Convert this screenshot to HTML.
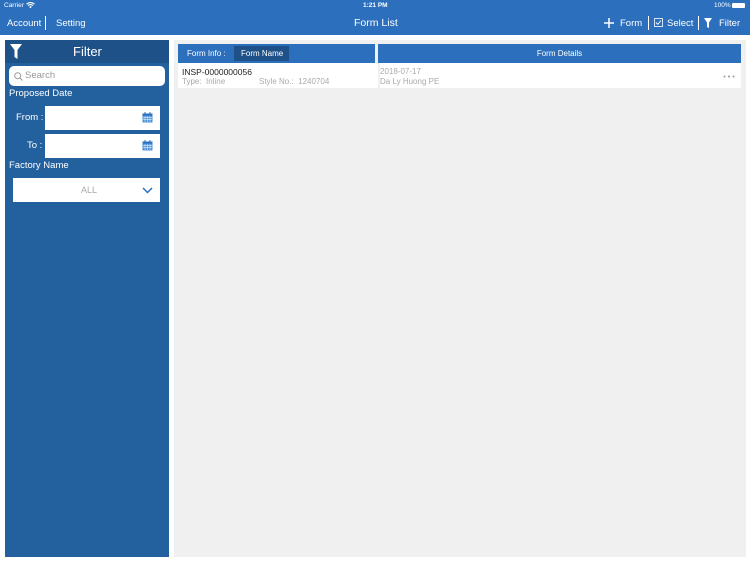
<!DOCTYPE html>
<html><head><meta charset="utf-8"><style>
*{margin:0;padding:0;box-sizing:border-box}
body{width:750px;height:562px;background:#fff;font-family:"Liberation Sans",sans-serif;position:relative;overflow:hidden}
.top{position:absolute;left:0;top:0;width:750px;height:35px;background:#2b6fbd;color:#fff}
.t{position:absolute;font-size:9.5px;color:#fff}
.abs{position:absolute}
.side{position:absolute;left:5px;top:40px;width:164px;height:517px;background:#23609e}
.sh{position:absolute;left:0;top:0;width:164px;height:23px;background:#1f5189}
.main{position:absolute;left:174px;top:40px;width:572px;height:517px;background:#f0f0f0}
.inp{position:absolute;background:#fff}
.lbl{position:absolute;color:#fff;font-size:9.5px}
</style></head><body>
<div class="top">
 <div class="abs" style="left:4px;top:2px;font-size:6.5px">Carrier
  <svg width="9" height="6" viewBox="0 0 9 6" style="vertical-align:-1px"><path d="M0.5 2.2Q4.5 -1 8.5 2.2M2 3.6Q4.5 1.6 7 3.6" stroke="#fff" stroke-width="1.1" fill="none"/><circle cx="4.5" cy="5" r="1" fill="#fff"/></svg></div>
 <div class="abs" style="left:363px;top:2px;font-size:6.5px;font-weight:bold">1:21 PM</div>
 <div class="abs" style="left:714px;top:2px;font-size:6.5px">100% <span style="display:inline-block;width:13px;height:5px;background:#fff;vertical-align:-0.5px;border-radius:1px"></span></div>
 <div class="t" style="left:7px;top:18px">Account</div>
 <div class="abs" style="left:45px;top:16px;width:1px;height:14px;background:#fff"></div>
 <div class="t" style="left:56px;top:18px">Setting</div>
 <div class="abs" style="left:354px;top:17px;font-size:10.5px">Form List</div>
 <svg class="abs" style="left:604px;top:18px" width="10" height="10"><path d="M5 0V10M0 5H10" stroke="#fff" stroke-width="1.5"/></svg>
 <div class="t" style="left:620px;top:18px">Form</div>
 <div class="abs" style="left:648px;top:16px;width:1px;height:14px;background:#fff"></div>
 <svg class="abs" style="left:654px;top:18px" width="9" height="9"><rect x="0.5" y="0.5" width="8" height="8" fill="none" stroke="#fff" stroke-width="0.8"/><path d="M2 4.5L3.8 6.3L7 2.5" stroke="#fff" stroke-width="0.9" fill="none"/></svg>
 <div class="t" style="left:667px;top:18px">Select</div>
 <div class="abs" style="left:698px;top:16px;width:1px;height:14px;background:#fff"></div>
 <svg class="abs" style="left:704px;top:18px" width="8" height="10"><path d="M0 0H8L5 4.5V10L3 9V4.5Z" fill="#fff"/></svg>
 <div class="t" style="left:719px;top:18px">Filter</div>
</div>

<div class="side">
 <div class="sh">
  <svg class="abs" style="left:5px;top:4px" width="12" height="15"><path d="M0 0H12L7.5 6V15L4.5 13V6Z" fill="#fff"/></svg>
  <div class="abs" style="left:68px;top:4px;color:#fff;font-size:13px">Filter</div>
 </div>
 <div class="inp" style="left:4px;top:26px;width:156px;height:20px;border-radius:5px">
  <svg class="abs" style="left:5px;top:6px" width="9" height="9"><circle cx="3.7" cy="3.7" r="3" fill="none" stroke="#999" stroke-width="1"/><path d="M6 6L8.5 8.5" stroke="#999" stroke-width="1"/></svg>
  <div class="abs" style="left:16px;top:4px;font-size:9.5px;color:#999">Search</div>
 </div>
 <div class="lbl" style="left:4px;top:48px">Proposed Date</div>
 <div class="lbl" style="left:11px;top:72px">From :</div>
 <div class="inp" style="left:40px;top:66px;width:115px;height:24px">
  <svg class="abs" style="left:97px;top:6px" width="11" height="11"><rect x="0.5" y="1.5" width="10" height="9" fill="#4a8fd6"/><rect x="0.5" y="1.5" width="10" height="2" fill="#2a6fc0"/><path d="M3 0V3M8 0V3" stroke="#2a6fc0"/><path d="M1 5.5H10M1 7.5H10M3 4V10M5.5 4V10M8 4V10" stroke="#fff" stroke-width="0.5"/></svg>
 </div>
 <div class="lbl" style="left:22px;top:100px">To :</div>
 <div class="inp" style="left:40px;top:94px;width:115px;height:24px">
  <svg class="abs" style="left:97px;top:6px" width="11" height="11"><rect x="0.5" y="1.5" width="10" height="9" fill="#4a8fd6"/><rect x="0.5" y="1.5" width="10" height="2" fill="#2a6fc0"/><path d="M3 0V3M8 0V3" stroke="#2a6fc0"/><path d="M1 5.5H10M1 7.5H10M3 4V10M5.5 4V10M8 4V10" stroke="#fff" stroke-width="0.5"/></svg>
 </div>
 <div class="lbl" style="left:4px;top:120px">Factory Name</div>
 <div class="inp" style="left:8px;top:138px;width:147px;height:24px">
  <div class="abs" style="left:68px;top:7px;font-size:9px;color:#aaa">ALL</div>
  <svg class="abs" style="left:129px;top:9px" width="11" height="7"><path d="M1 1L5.5 5.5L10 1" stroke="#2a6fc0" stroke-width="1.5" fill="none"/></svg>
 </div>
</div>

<div class="main">
 <div class="abs" style="left:4px;top:4px;width:197px;height:19px;background:#2b6fbd">
  <div class="abs" style="left:9px;top:5px;font-size:8px;color:#fff">Form Info :</div>
  <div class="abs" style="left:56px;top:2px;width:55px;height:15px;background:#1f5189;color:#fff;font-size:8px;padding:3px 0 0 7px">Form Name</div>
 </div>
 <div class="abs" style="left:204px;top:4px;width:363px;height:19px;background:#2b6fbd;color:#fff;font-size:8px;text-align:center;padding-top:5px">Form Details</div>
 <div class="abs" style="left:4px;top:23px;width:563px;height:25px;background:#fff">
  <div class="abs" style="left:4px;top:4px;font-size:8.5px;color:#222">INSP-0000000056</div>
  <div class="abs" style="left:4px;top:14px;font-size:8px;color:#aaa">Type:&nbsp; Inline</div>
  <div class="abs" style="left:81px;top:14px;font-size:8px;color:#aaa">Style No.:&nbsp; 1240704</div>
  <div class="abs" style="left:200px;top:0;width:2px;height:25px;background:#f0f0f0"></div>
  <div class="abs" style="left:202px;top:4px;font-size:8px;color:#aaa">2018-07-17</div>
  <div class="abs" style="left:202px;top:14px;font-size:8px;color:#aaa">Da Ly Huong PE</div>
  <svg class="abs" style="left:545px;top:12px" width="12" height="3"><circle cx="1.5" cy="1.5" r="1" fill="#999"/><circle cx="6" cy="1.5" r="1" fill="#999"/><circle cx="10.5" cy="1.5" r="1" fill="#999"/></svg>
 </div>
</div>
</body></html>
